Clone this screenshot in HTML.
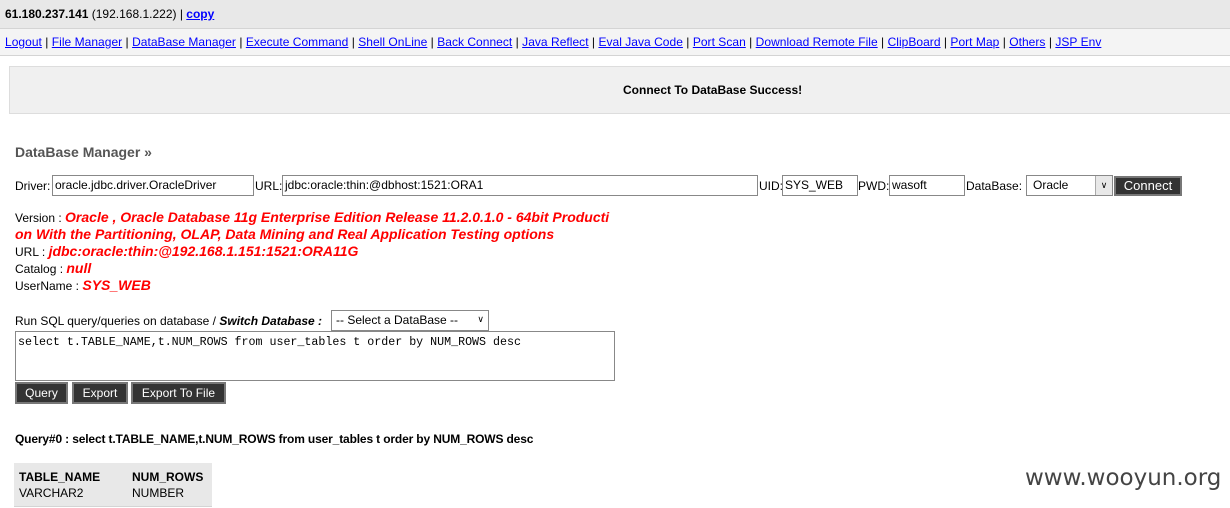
<!DOCTYPE html>
<html><head><meta charset="utf-8"><style>
body{margin:0;width:1230px;height:508px;overflow:hidden;background:#fff;font-family:"Liberation Sans",Arial,sans-serif;font-size:12px;color:#000;position:relative}
.a{position:absolute;white-space:nowrap}
a{color:#00f;text-decoration:underline}
.inp{position:absolute;border:1px solid #888;background:#fff;box-sizing:border-box;height:21px;padding:2px 2px;font-size:12px;line-height:15px}
.btn{position:absolute;background:#333;color:#fff;border:2px solid #777;box-sizing:border-box;text-align:center;font-size:12px}
.red{color:#f00;font-weight:bold;font-style:italic;font-size:14px}
</style></head><body>
<div class="a" style="left:0;top:0;width:1230px;height:28px;background:#e8e8e8;border-bottom:1px solid #d4d4d4"></div>
<div class="a" style="left:5px;top:7px"><b>61.180.237.141</b> (192.168.1.222) | <a><b>copy</b></a></div>
<div class="a" style="left:0;top:29px;width:1230px;height:26px;background:#f4f4f4;border-bottom:1px solid #d4d4d4"></div>
<div class="a" style="left:5px;top:35px;letter-spacing:0.03px"><a>Logout</a> | <a>File Manager</a> | <a>DataBase Manager</a> | <a>Execute Command</a> | <a>Shell OnLine</a> | <a>Back Connect</a> | <a>Java Reflect</a> | <a>Eval Java Code</a> | <a>Port Scan</a> | <a>Download Remote File</a> | <a>ClipBoard</a> | <a>Port Map</a> | <a>Others</a> | <a>JSP Env</a></div>
<div class="a" style="left:9px;top:66px;width:1221px;height:46px;background:#f0f0f0;border:1px solid #ddd"></div>
<div class="a" style="left:623px;top:83px;font-weight:bold">Connect To DataBase Success!</div>
<div class="a" style="left:15px;top:144px;font-size:14px;font-weight:bold;color:#555">DataBase Manager »</div>
<div class="a" style="left:15px;top:179px">Driver:</div>
<div class="inp" style="left:52px;top:175px;width:202px">oracle.jdbc.driver.OracleDriver</div>
<div class="a" style="left:255px;top:179px">URL:</div>
<div class="inp" style="left:282px;top:175px;width:476px">jdbc:oracle:thin:@dbhost:1521:ORA1</div>
<div class="a" style="left:759px;top:179px">UID:</div>
<div class="inp" style="left:782px;top:175px;width:76px">SYS_WEB</div>
<div class="a" style="left:858px;top:179px">PWD:</div>
<div class="inp" style="left:889px;top:175px;width:76px">wasoft</div>
<div class="a" style="left:966px;top:179px">DataBase:</div>
<div class="inp" style="left:1026px;top:175px;width:87px;padding-left:6px">Oracle<span style="position:absolute;right:0;top:0;width:16px;height:19px;background:#e8e8e8;border-left:1px solid #aaa;font-size:9px;text-align:center;line-height:19px">&#8744;</span></div>
<div class="btn" style="left:1114px;top:176px;width:68px;height:20px;line-height:16px;font-size:13px">Connect</div>
<div class="a" style="left:15px;top:209px">Version : <span class="red">Oracle , Oracle Database 11g Enterprise Edition Release 11.2.0.1.0 - 64bit Producti</span></div>
<div class="a" style="left:15px;top:226px"><span class="red">on With the Partitioning, OLAP, Data Mining and Real Application Testing options</span></div>
<div class="a" style="left:15px;top:243px">URL : <span class="red">jdbc:oracle:thin:@192.168.1.151:1521:ORA11G</span></div>
<div class="a" style="left:15px;top:260px">Catalog : <span class="red">null</span></div>
<div class="a" style="left:15px;top:277px">UserName : <span class="red">SYS_WEB</span></div>
<div class="a" style="left:15px;top:314px">Run SQL query/queries on database / <b><i>Switch Database :</i></b></div>
<div class="inp" style="left:331px;top:310px;width:158px;padding-left:4px">-- Select a DataBase --<span style="position:absolute;right:4px;top:1px;font-size:9px">&#8744;</span></div>
<div class="inp" style="left:15px;top:331px;width:600px;height:50px;font-family:'Liberation Mono',monospace;font-size:11.65px;padding:3px 2px">select t.TABLE_NAME,t.NUM_ROWS from user_tables t order by NUM_ROWS desc</div>
<div class="btn" style="left:15px;top:382px;width:53px;height:22px;line-height:18px">Query</div>
<div class="btn" style="left:72px;top:382px;width:56px;height:22px;line-height:18px">Export</div>
<div class="btn" style="left:131px;top:382px;width:95px;height:22px;line-height:18px">Export To File</div>
<div class="a" style="left:15px;top:432px;font-weight:bold;letter-spacing:-0.15px">Query#0 : select t.TABLE_NAME,t.NUM_ROWS from user_tables t order by NUM_ROWS desc</div>
<div class="a" style="left:14px;top:463px;width:198px;height:43px;background:#e8e8e8;border-bottom:1px solid #d4d4d4"></div>
<div class="a" style="left:19px;top:470px;font-weight:bold">TABLE_NAME</div>
<div class="a" style="left:132px;top:470px;font-weight:bold">NUM_ROWS</div>
<div class="a" style="left:19px;top:486px">VARCHAR2</div>
<div class="a" style="left:132px;top:486px">NUMBER</div>
<div class="a" style="left:1025px;top:465px;font-size:23px;color:#444;font-family:'DejaVu Sans',sans-serif">www.wooyun.org</div>
</body></html>
